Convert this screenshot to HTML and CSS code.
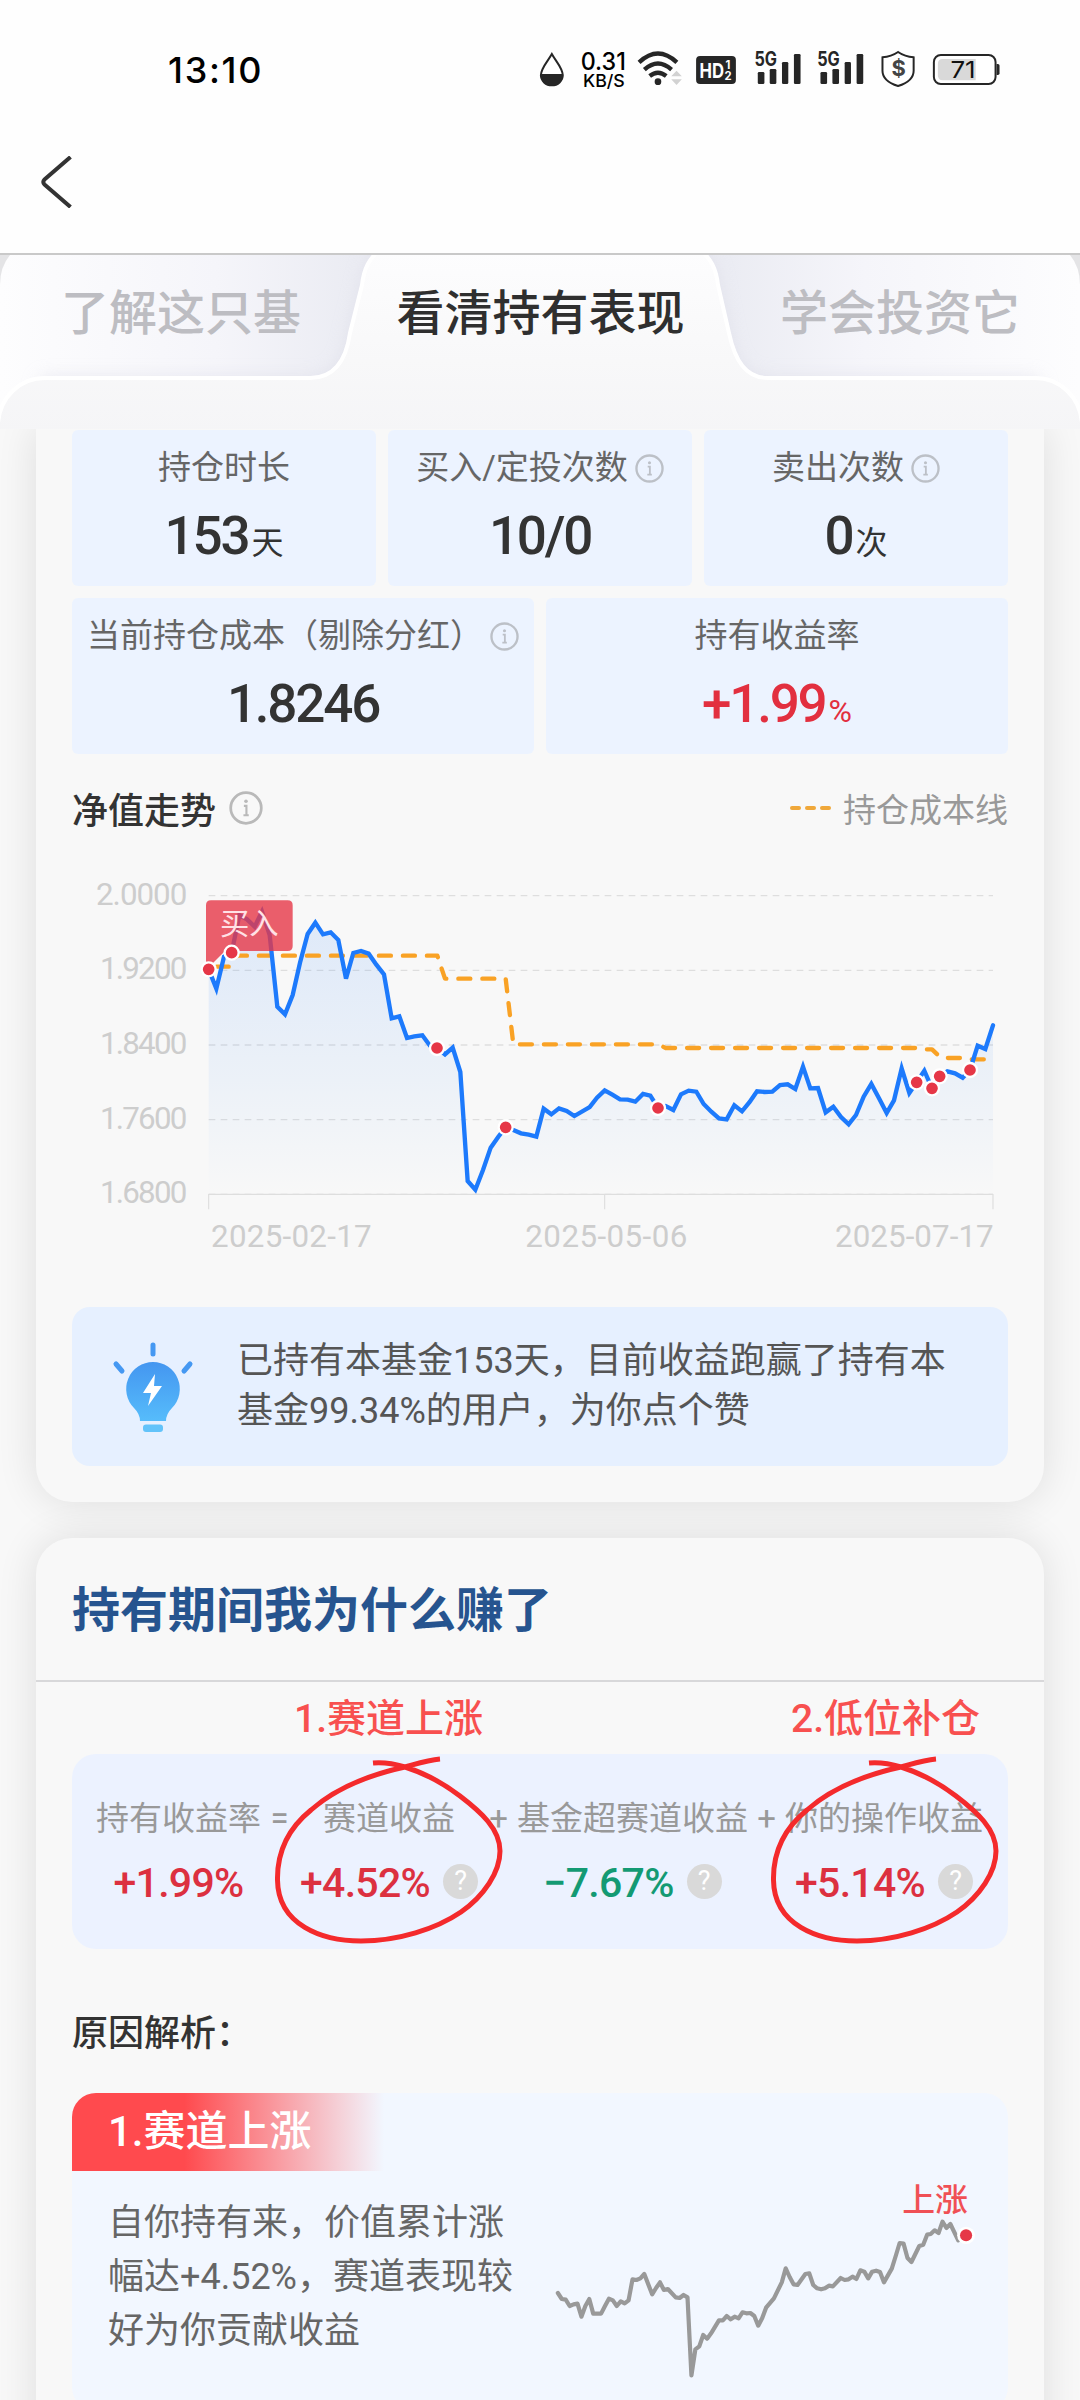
FILE: index.html
```html
<!DOCTYPE html>
<html lang="zh-CN">
<head>
<meta charset="utf-8">
<title>看清持有表现</title>
<link rel="stylesheet" href="styles.css">
</head>
<body>
<svg class="defs" width="0" height="0" aria-hidden="true">
  <symbol id="info" viewBox="0 0 32 32">
    <circle cx="16" cy="16" r="14.4" fill="none" stroke="currentColor" stroke-width="2.6"/>
    <circle cx="16" cy="9.6" r="1.7" fill="currentColor"/>
    <path d="M14 14h2.400v8.800M13.600 22.800h5" fill="none" stroke="currentColor" stroke-width="2"/>
  </symbol>
  <symbol id="ring" viewBox="0 0 240 200">
    <path d="M103 13C114 12 125 14 135 17C154 23 173 33 190 46C211 62 230 79 230 101C230 122 214 146 191 162C166 179 128 191 91 191C52 191 8 175 7.500 130C7 100 20 77 41 60C67 37 103 24 135 17C146 14 158 10 170 9" fill="none" stroke="#f42a2c" stroke-width="5"/>
  </symbol>
</svg>
<div class="screen">
  <header class="status">
    <span class="time">13:10</span>
    <svg class="status-icons" viewBox="0 0 1568 240" preserveAspectRatio="none">
      <path d="M96 72C84 94 63 114 63 136a33 30 0 0 0 66 0C129 114 108 94 96 72z" fill="#fff" stroke="#262626" stroke-width="6"/>
      <path d="M62 132h68c2 46-70 46-68 0z" fill="#262626"/>
      <text x="183" y="119" font-size="72" font-weight="500" textLength="136" lengthAdjust="spacingAndGlyphs">0.31</text>
      <text x="190" y="171" font-size="52" font-weight="500" textLength="126" lengthAdjust="spacingAndGlyphs">KB/S</text>
      <g fill="none" stroke="#262626" stroke-width="13">
        <path d="M359 97Q416 44 473 97"/><path d="M375 119Q416 82 457 119"/><path d="M391 138Q416 118 441 138"/>
      </g>
      <circle cx="416" cy="155" r="10" fill="#262626"/>
      <path d="M456 139l16-17 16 17zM456 148h32l-16 17z" fill="#d2d2d2"/>
      <rect x="531" y="78" width="120" height="84" rx="12" fill="#262626"/>
      <text x="541" y="143" fill="#fff" font-size="62" font-weight="700" textLength="74" lengthAdjust="spacingAndGlyphs">HD</text>
      <text x="620" y="116" fill="#fff" font-size="34" font-weight="700">1</text>
      <text x="617" y="151" fill="#fff" font-size="34" font-weight="700">2</text>
      <g id="sig" fill="#262626">
        <text x="707" y="109" font-size="59" font-weight="700" textLength="68" lengthAdjust="spacingAndGlyphs">5G</text>
        <rect x="717" y="126" width="20" height="36" rx="4"/><rect x="753" y="117" width="20" height="45" rx="4"/><rect x="790" y="96" width="19" height="66" rx="4"/><rect x="826" y="72" width="20" height="90" rx="4"/>
      </g>
      <use href="#sig" x="189"/>
      <path d="M1140 66C1156 77 1173 81 1187 82V122C1187 146 1162 161 1140 168C1118 161 1093 146 1093 122V82C1107 81 1124 77 1140 66z" fill="#fff" stroke="#262626" stroke-width="6"/>
      <text x="1120" y="139" fill="#444" font-size="66" font-weight="700">$</text>
      <rect x="1248" y="75" width="186" height="87" rx="21" fill="#fff" stroke="#262626" stroke-width="6"/>
      <path d="M1275 87h99v64h-99q-15 0-15-15v-34q0-15 15-15z" fill="#d9d9d9"/>
      <text x="1298" y="143" fill="#111" font-size="70" textLength="76" lengthAdjust="spacingAndGlyphs">71</text>
      <path d="M1437 102h4q5 0 5 5v23q0 5-5 5h-4z" fill="#262626"/>
    </svg>
  </header>
  <nav class="navbar">
    <svg class="back" viewBox="0 0 32 52"><path d="M30.500 1L4.500 23.500Q2 26 4.500 28.500L30.500 51" fill="none" stroke="#333" stroke-width="4"/></svg>
  </nav>

  <div class="tabs">
    <svg class="tabs-bg" viewBox="0 0 1080 174">
      <defs>
        <linearGradient id="tl" x1="0" x2="1" y1="0" y2="0"><stop offset="0" stop-color="#fdfdfe"/><stop offset=".4" stop-color="#f5f5fa"/><stop offset=".65" stop-color="#ebecf3"/><stop offset="1" stop-color="#e8e8f0"/></linearGradient>
        <linearGradient id="tr" x1="0" x2="1" y1="0" y2="0"><stop offset="0" stop-color="#e8e8f0"/><stop offset=".35" stop-color="#ebecf3"/><stop offset=".6" stop-color="#f5f5fa"/><stop offset="1" stop-color="#fdfdfe"/></linearGradient>
        <linearGradient id="pn" x1="0" x2="0" y1="0" y2="1"><stop offset="0" stop-color="#fdfdfe"/><stop offset=".6" stop-color="#f8f8f9"/><stop offset="1" stop-color="#f5f5f7"/></linearGradient>
        <filter id="soft" x="-10%" y="-30%" width="120%" height="160%"><feGaussianBlur stdDeviation="9"/></filter>
      </defs>
      <rect width="1080" height="174" fill="#e4e4e6"/>
      <path d="M0 174V30Q0 12 10 0H540V174z" fill="url(#tl)"/>
      <path d="M1080 174V30Q1080 12 1070 0H540V174z" fill="url(#tr)"/>
      <path d="M40 123H312C334 122 345 108 349 82L362 30C364 12 370 4 378 -4H702C710 4 716 12 718 30L729 82C735 108 744 122 768 123H1040V174H40z" fill="#d9d9e4" filter="url(#soft)" opacity=".6"/>
      <path d="M-2 178V168C0 142 20 123 45 123H310C334 123 346 106 350 78L362 30C364 12 370 4 378 -4H702C710 4 716 12 718 30L729 78C735 106 746 123 768 123H1035C1060 123 1080 142 1082 168V178z" fill="url(#pn)" stroke="#fff" stroke-width="4"/>
    </svg>
    <span class="tab">了解这只基</span>
    <span class="tab active">看清持有表现</span>
    <span class="tab">学会投资它</span>
  </div>

  <main class="content">
    <section class="card card-hold">
      <div class="tiles three">
        <div class="tile"><div class="label">持仓时长</div><div class="value">153<small>天</small></div></div>
        <div class="tile"><div class="label">买入/定投次数<svg class="i"><use href="#info"/></svg></div><div class="value">10/0</div></div>
        <div class="tile"><div class="label">卖出次数<svg class="i"><use href="#info"/></svg></div><div class="value">0<small>次</small></div></div>
      </div>
      <div class="tiles two">
        <div class="tile"><div class="label">当前持仓成本（剔除分红）<svg class="i"><use href="#info"/></svg></div><div class="value">1.8246</div></div>
        <div class="tile"><div class="label">持有收益率</div><div class="value red">+1.99<small class="pct">%</small></div></div>
      </div>
      <div class="trend-head">
        <span class="trend-title">净值走势</span><svg class="i big"><use href="#info"/></svg>
        <span class="legend"><i></i><i></i><i></i><b>持仓成本线</b></span>
      </div>
      <svg class="chart" viewBox="36 0 2808 1260">
        <defs><linearGradient id="area" gradientUnits="userSpaceOnUse" x1="0" y1="150" x2="0" y2="1003"><stop offset="0" stop-color="#1d7afc" stop-opacity=".12"/><stop offset=".6" stop-color="#1d7afc" stop-opacity=".055"/><stop offset="1" stop-color="#1d7afc" stop-opacity="0"/></linearGradient></defs>
        <path d="M446 107H2799M446 331H2799M446 555H2799M446 779H2799M446 1003H2799" stroke="#dedede" stroke-width="4" stroke-dasharray="20 16"/>
        <path d="M446 1003H2799M446 1002V1048M1634 1002V1048M2799 1002V1048" fill="none" stroke="#dedede" stroke-width="3.500"/>
        <path fill="url(#area)" d="M446 1003V328L469 386 492 290 515 278 538 165 561 178 584 200 606 155 629 225 652 440 675 463 698 405 720 308 743 222 766 188 789 223 812 217 835 240 858 356 880 279 903 273 926 281 949 314 972 343 995 475 1018 469 1041 534 1063 529 1087 526 1110 557 1131 564 1155 583 1178 563 1201 636 1223 963 1246 989 1269 930 1292 863 1315 830 1337 802 1360 810 1383 820 1406 824 1429 830 1451 746 1474 763 1497 745 1520 753 1543 768 1589 741 1611 713 1634 691 1657 704 1680 718 1703 719 1726 725 1749 702 1771 707 1794 744 1817 738 1840 750 1863 703 1886 692 1909 695 1931 732 1954 755 1977 775 2000 778 2023 736 2046 754 2069 726 2091 694 2114 696 2137 695 2160 675 2183 673 2206 687 2229 620 2251 685 2274 684 2297 757 2320 740 2343 771 2366 793 2388 765 2411 710 2434 672 2457 715 2480 759 2502 721 2525 625 2548 699 2570 667 2593 632 2616 685 2639 649 2662 634 2685 640 2708 653 2730 630 2753 557 2776 567 2799 496V1003z"/>
        <path fill="none" stroke="#f9a225" stroke-width="13" stroke-linecap="round" stroke-linejoin="round" stroke-dasharray="36 36" stroke-dashoffset="-24" d="M446 320H507L530 287H1132L1155 356H1337L1360 553H1794L1817 564H2571L2593 568H2616L2639 590 2662 594H2708L2730 598H2776"/>
        <path fill="none" stroke="#1d7afc" stroke-width="13" stroke-linecap="round" stroke-linejoin="miter" d="M446 328L469 386 492 290 515 278 538 165 561 178 584 200 606 155 629 225 652 440 675 463 698 405 720 308 743 222 766 188 789 223 812 217 835 240 858 356 880 279 903 273 926 281 949 314 972 343 995 475 1018 469 1041 534 1063 529 1087 526 1110 557 1131 564 1155 583 1178 563 1201 636 1223 963 1246 989 1269 930 1292 863 1315 830 1337 802 1360 810 1383 820 1406 824 1429 830 1451 746 1474 763 1497 745 1520 753 1543 768 1589 741 1611 713 1634 691 1657 704 1680 718 1703 719 1726 725 1749 702 1771 707 1794 744 1817 738 1840 750 1863 703 1886 692 1909 695 1931 732 1954 755 1977 775 2000 778 2023 736 2046 754 2069 726 2091 694 2114 696 2137 695 2160 675 2183 673 2206 687 2229 620 2251 685 2274 684 2297 757 2320 740 2343 771 2366 793 2388 765 2411 710 2434 672 2457 715 2480 759 2502 721 2525 625 2548 699 2570 667 2593 632 2616 685 2639 649 2662 634 2685 640 2708 653 2730 630 2753 557 2776 567 2799 496"/>
        <path d="M453 121H683Q698 121 698 136V258Q698 273 683 273H495L438 330V136Q438 121 453 121z" fill="#e63747" fill-opacity=".8"/>
        <text x="480" y="223" font-size="88" fill="#ffe1e6">买入</text>
        <g fill="#e63747" stroke="#fff" stroke-width="7">
          <circle cx="446" cy="328" r="21"/><circle cx="515" cy="278" r="21"/><circle cx="1131" cy="564" r="21"/><circle cx="1337" cy="802" r="21"/><circle cx="1794" cy="744" r="21"/><circle cx="2570" cy="667" r="21"/><circle cx="2616" cy="685" r="21"/><circle cx="2639" cy="649" r="21"/><circle cx="2730" cy="630" r="21"/>
        </g>
        <g font-size="94" fill="#cdcdcd">
          <text x="108" y="134" textLength="274">2.0000</text><text x="120" y="356" textLength="262">1.9200</text><text x="120" y="581" textLength="262">1.8400</text><text x="120" y="806" textLength="262">1.7600</text><text x="120" y="1028" textLength="262">1.6800</text>
          <text x="453" y="1160" textLength="482">2025-02-17</text><text x="1396" y="1160" textLength="486">2025-05-06</text><text x="2325" y="1160" textLength="476">2025-07-17</text>
        </g>
      </svg>
      <div class="hint">
        <svg class="bulb" viewBox="0 0 84 94">
          <defs><linearGradient id="bg" x1="0" x2="0" y1="0" y2="1"><stop offset="0" stop-color="#4496f0"/><stop offset="1" stop-color="#56bcfb"/></linearGradient></defs>
          <g stroke="#4598f2" stroke-width="5" stroke-linecap="round"><path d="M42 5v9M5 24l6 7M79 24l-6 7"/></g>
          <path d="M42 22a27 27 0 0 1 19 46q-6 6-6 13H29q0-7-6-13A27 27 0 0 1 42 22z" fill="url(#bg)"/>
          <rect x="32" y="84.500" width="20" height="7.500" rx="3" fill="#62c3fa"/>
          <path d="M44 34L32 53h8l-3 13 14-20h-8z" fill="#fff"/>
        </svg>
        <p>已持有本基金153天，目前收益跑赢了持有本<br>基金99.34%的用户，为你点个赞</p>
      </div>
    </section>

    <section class="card card-why">
      <h2>持有期间我为什么赚了</h2>
      <div class="notes"><span>1.赛道上涨</span><span>2.低位补仓</span></div>
      <div class="formula">
        <div class="term"><span class="name">持有收益率</span><span class="num">+1.99%</span></div>
        <span class="op">=</span>
        <div class="term track"><span class="name">赛道收益</span><span class="num">+4.52%<em>?</em></span><svg class="ring"><use href="#ring"/></svg></div>
        <span class="op">+</span>
        <div class="term"><span class="name">基金超赛道收益</span><span class="num green">−7.67%<em>?</em></span></div>
        <span class="op">+</span>
        <div class="term action"><span class="name">你的操作收益</span><span class="num">+5.14%<em>?</em></span><svg class="ring"><use href="#ring"/></svg></div>
      </div>
      <h3>原因解析：</h3>
      <article class="reason">
        <div class="tag">1.赛道上涨</div>
        <div class="reason-body">
          <p>自你持有来，价值累计涨<br>幅达+4.52%，赛道表现较<br>好为你贡献收益</p>
          <svg class="spark" viewBox="84 339 1204 660" preserveAspectRatio="none">
            <path vector-effect="non-scaling-stroke" fill="none" stroke="#999" stroke-width="4.200" stroke-linejoin="round" stroke-linecap="round" d="M106 699L117 717 128 719 139 738 150 733 161 731 172 770 183 738 194 717 205 761 227 761 238 738 249 716 260 721 271 738 282 724 293 730 304 721 315 658 326 660 337 655 348 642 370 703 381 684 392 667 403 690 414 687 436 712 447 714 458 705 469 712 480 946 491 868 502 859 513 825 524 836 535 820 557 781 568 781 579 768 590 778 601 770 612 775 623 757 634 760 645 759 656 768 667 797 678 775 689 743 711 715 733 667 744 625 755 651 766 673 777 675 799 642 810 640 821 675 832 685 843 688 854 685 865 677 876 679 898 654 909 660 920 658 931 650 942 657 953 631 964 635 975 655 986 635 997 632 1008 636 1019 667 1041 626 1052 588 1063 549 1074 551 1085 594 1096 606 1118 558 1129 554 1140 524 1150 522 1161 511 1172 519 1183 485 1194 504 1205 492 1227 541"/>
            <ellipse cx="1249" cy="526" rx="25" ry="26" fill="#fff"/><ellipse cx="1249" cy="526" rx="17" ry="18" fill="#e63747"/>
            <text x="1070" y="453" font-size="96" font-weight="500" fill="#f05055" textLength="184" lengthAdjust="spacingAndGlyphs">上涨</text>
          </svg>
        </div>
      </article>
    </section>
  </main>
</div>
</body>
</html>
```

FILE: styles.css
```css
* { box-sizing: border-box; margin: 0; padding: 0; }
body {
  background: #f8f8f8;
  font-family: Roboto, "Noto Sans CJK SC", sans-serif;
  color: #333;
}
svg { display: block; flex: none; }
.defs { position: absolute; }
.screen { width: 1080px; height: 2400px; overflow: hidden; }

.status { height: 140px; background: #fefefe; display: flex; justify-content: space-between; padding: 30px 40px 0 168px; }
.time { font-family: Inter, sans-serif; font-size: 36px; letter-spacing: 1.700px; font-weight: 500; line-height: 80px; color: #000; }
.status-icons { width: 520px; height: 80px; font-family: Inter, sans-serif; }
.navbar { height: 115px; background: #fefefe; border-bottom: 2px solid #c9c9c9; padding: 16px 0 0 40px; }
.back { width: 32px; height: 52px; }

.tabs { position: relative; height: 173px; display: flex; justify-content: space-between; padding: 23px 60px 0 61px; }
.tabs-bg { position: absolute; inset: 0; width: 1080px; height: 174px; }
.tab { position: relative; font-size: 48px; line-height: 72px; font-weight: 500; color: #bdbdc2; }
.tab.active { color: #2f2f2f; }

.content { padding: 0 36px; height: 1972px; overflow: hidden; background: #f8f8f8; }
.card { background: #f8f8f8; box-shadow: 0 0 40px rgba(0, 0, 0, .11); padding: 0 36px; }
.card-hold { height: 1074px; border-radius: 0 0 36px 36px; padding-top: 2px; }
.tiles { display: grid; gap: 12px; margin-bottom: 12px; }
.three { grid-template-columns: repeat(3, 1fr); }
.two { grid-template-columns: repeat(2, 1fr); }
.tile { height: 156px; background: #ecf3ff; border-radius: 6px; padding-top: 15px; }
.label { display: flex; justify-content: center; align-items: center; font-size: 33px; line-height: 46px; color: #666; white-space: nowrap; }
.i { width: 29px; height: 29px; margin-left: 7px; color: #bcc0c7; }
.value { text-align: center; font-size: 53px; font-weight: 500; line-height: 60px; margin-top: 15px; letter-spacing: -2.200px; }
.value small { font-size: 32px; font-weight: 400; letter-spacing: 0; margin-left: 3px; }
.red { color: #e22f3f; }

.trend-head { display: flex; align-items: center; height: 50px; margin-top: 29px; }
.trend-title { font-size: 36px; font-weight: 500; }
.big { width: 34px; height: 34px; margin-left: 13px; color: #b9b9b9; }
.legend { margin-left: auto; display: flex; align-items: center; gap: 4px; }
.legend i { width: 11px; height: 4px; border-radius: 2px; background: #f0a83a; }
.legend b { font-size: 33px; font-weight: 400; color: #999; margin-left: 8px; }
.chart { width: 936px; height: 420px; margin-top: 27px; }

.hint { height: 159px; margin-top: 27px; border-radius: 18px; background: #e6f0ff; display: flex; padding: 33px 0 0 39px; }
.bulb { width: 84px; height: 94px; }
.hint p { font-size: 36px; line-height: 50px; color: #555; margin: -4px 0 0 42px; white-space: nowrap; }

.card-why { height: 1000px; margin-top: 36px; border-radius: 36px; }
h2 { font-size: 48px; line-height: 72px; font-weight: 700; color: #26548f; height: 144px; padding: 37px 36px 0; margin: 0 -36px; border-bottom: 2px solid #d8d8da; }
.notes { display: flex; justify-content: space-between; padding: 9px 28px 0 222px; font-size: 39px; line-height: 56px; font-weight: 500; color: #f8504f; height: 72px; }
.formula { height: 195px; border-radius: 24px; background: #ecf2ff; display: flex; padding: 41px 0 0 24px; }
.term { position: relative; display: flex; flex-direction: column; }
.track { width: 182px; }
.name, .op { font-size: 33px; line-height: 48px; color: #999; white-space: nowrap; text-align: center; }
.op { width: 37px; text-align: center; }
.num { font-size: 41px; font-weight: 500; line-height: 50px; margin-top: 15px; letter-spacing: -.700px; color: #dc3040; text-align: center; white-space: nowrap; }
.num em { display: inline-block; width: 35px; height: 35px; border-radius: 50%; background: #d9d9d9; color: #fff; font: 400 27px/35px Roboto, sans-serif; letter-spacing: 0; margin-left: 13px; vertical-align: 7px; }
.green { color: #139a73; }
.ring { position: absolute; width: 240px; height: 200px; left: -28px; top: -45px; }
.action .ring { left: -19px; }
h3 { font-size: 36px; line-height: 54px; font-weight: 500; margin-top: 58px; }
.reason { height: 318px; margin-top: 32px; border-radius: 24px; background: #f2f7ff; overflow: hidden; }
.tag { width: 312px; height: 78px; padding-left: 36px; background: linear-gradient(90deg, #ff4a4e 36%, rgba(255, 74, 78, 0)); color: #fff; font-size: 42px; line-height: 78px; font-weight: 500; }
.reason-body { display: flex; padding-left: 36px; }
.reason-body p { font-size: 36px; line-height: 54px; color: #666; padding-top: 25px; width: 442px; white-space: nowrap; }
.spark { width: 430px; height: 220px; margin-top: 2px; }
```
